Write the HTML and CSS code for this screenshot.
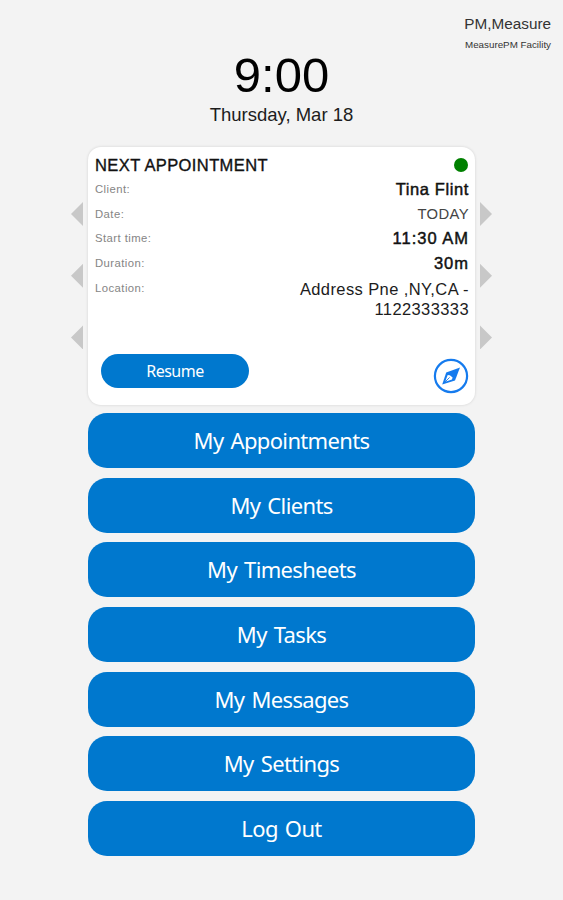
FILE: index.html
```html
<!DOCTYPE html>
<html lang="en">
<head>
    <meta charset="UTF-8">
    <meta name="viewport" content="width=device-width, initial-scale=1.0">
    <title>Home</title>
    <link rel="stylesheet" href="styles.css">
</head>
<body>
    <!-- Logged in user -->
    <header class="user-info">
        <div class="user-name">PM,Measure</div>
        <div class="user-facility">MeasurePM Facility</div>
    </header>

    <!-- Clock -->
    <div class="clock">
        <div class="clock-time">9:00</div>
        <div class="clock-date">Thursday, Mar 18</div>
    </div>

    <!-- Next appointment -->
    <div class="carousel">
        <div class="arrows">
            <div class="arrow left"></div>
            <div class="arrow left"></div>
            <div class="arrow left"></div>
        </div>

        <div class="card">
            <div class="card-header">
                <h2 class="card-title">NEXT APPOINTMENT</h2>
                <div class="status-dot"></div>
            </div>
            <div class="row">
                <span class="label">Client:</span>
                <span class="value strong">Tina Flint</span>
            </div>
            <div class="row">
                <span class="label">Date:</span>
                <span class="value today">TODAY</span>
            </div>
            <div class="row">
                <span class="label">Start time:</span>
                <span class="value strong time">11:30 AM</span>
            </div>
            <div class="row">
                <span class="label">Duration:</span>
                <span class="value strong time">30m</span>
            </div>
            <div class="row location">
                <span class="label">Location:</span>
                <span class="value address">Address Pne ,NY,CA -<br>1122333333</span>
            </div>
            <div class="card-footer">
                <button class="resume">Resume</button>
                <svg class="compass" viewBox="0 0 36 36">
                    <circle cx="18" cy="18" r="16.1" fill="none" stroke="#157bee" stroke-width="2.2"/>
                    <path d="M27 9.6 L22 22.6 L9.2 26.6 L13.2 14.6 Z" fill="#157bee"/>
                    <path d="M14.7 17 L16.8 17.2 L19.6 19.6 L19 21.6 L12.2 23.8 Z" fill="#fff"/>
                    <path d="M11.6 24.4 L16.6 19.4" stroke="#157bee" stroke-width="0.9"/>
                </svg>
            </div>
        </div>

        <div class="arrows">
            <div class="arrow right"></div>
            <div class="arrow right"></div>
            <div class="arrow right"></div>
        </div>
    </div>

    <!-- Menu -->
    <nav class="menu">
        <button class="menu-btn">My Appointments</button>
        <button class="menu-btn">My Clients</button>
        <button class="menu-btn">My Timesheets</button>
        <button class="menu-btn">My Tasks</button>
        <button class="menu-btn">My Messages</button>
        <button class="menu-btn">My Settings</button>
        <button class="menu-btn">Log Out</button>
    </nav>
</body>
</html>
```
FILE: styles.css
```css
* {
    margin: 0;
    padding: 0;
    box-sizing: border-box;
}

body {
    height: 100vh;
    background: #f3f3f3;
    overflow: hidden;
    font-family: "Liberation Sans", Arial, sans-serif;
    color: #1c1c1c;
}

/* User */
.user-info {
    height: 50px;
    padding: 14px 12px 0 0;
    text-align: right;
    color: #333;
}

.user-name {
    font-size: 15.3px;
    line-height: 20px;
}

.user-facility {
    margin-top: 4px;
    font-size: 9.8px;
    line-height: 14px;
}

/* Clock */
.clock {
    height: 97px;
    text-align: center;
}

.clock-time {
    font-size: 49px;
    line-height: 50px;
    color: #000;
}

.clock-date {
    font-size: 18.5px;
    line-height: 22px;
    margin-top: 4px;
}

/* Appointment card */
.carousel {
    display: flex;
    justify-content: center;
    gap: 5px;
    height: 258px;
}

.arrows {
    display: flex;
    flex-direction: column;
    gap: 37.7px;
    padding-top: 55px;
}

.arrow {
    width: 12px;
    height: 24px;
    background: #c8c8c8;
}

.arrow.left {
    clip-path: polygon(100% 0, 100% 100%, 0 50%);
}

.arrow.right {
    clip-path: polygon(0 0, 100% 50%, 0 100%);
}

.card {
    display: flex;
    flex-direction: column;
    width: 387px;
    padding: 6px 6px 0 7px;
    background: #fff;
    border-radius: 13px;
    box-shadow: 0 0 3px rgba(0, 0, 0, 0.14);
}

.card-header {
    display: flex;
    justify-content: space-between;
    align-items: center;
    height: 24px;
}

.card-title {
    font-size: 16.5px;
    font-weight: normal;
    letter-spacing: 0.4px;
    color: #111;
    -webkit-text-stroke: 0.35px #111;
}

.status-dot {
    width: 14px;
    height: 14px;
    border-radius: 50%;
    background: #008000;
    margin-right: 1px;
}

.row {
    display: flex;
    justify-content: space-between;
    height: 24.7px;
    line-height: 25px;
}

.label {
    font-size: 11.3px;
    letter-spacing: 0.45px;
    color: #858585;
}

.value {
    font-size: 16.5px;
    letter-spacing: 0.4px;
    text-align: right;
}

.strong {
    letter-spacing: 0.6px;
    color: #111;
    -webkit-text-stroke: 0.45px #111;
}

.time {
    letter-spacing: 1px;
}

.today {
    font-size: 14.8px;
    color: #444;
}

.address {
    line-height: 20px;
    padding-top: 3px;
}

.location {
    height: 78px;
}

.card-footer {
    display: flex;
    justify-content: space-between;
    align-items: flex-start;
    padding-left: 6px;
}

.resume {
    width: 148px;
    height: 34px;
    border: none;
    border-radius: 17px;
    background: #0078ce;
    color: #fff;
    font-family: "Noto Sans", sans-serif;
    font-size: 16px;
    letter-spacing: -0.5px;
}

.compass {
    width: 36px;
    height: 36px;
    margin-top: 4px;
}

/* Menu buttons */
.menu {
    display: flex;
    flex-direction: column;
    align-items: center;
    gap: 9.7px;
    padding-top: 8px;
}

.menu-btn {
    width: 387px;
    height: 55px;
    padding-bottom: 1px;
    border: none;
    border-radius: 19px;
    background: #0078ce;
    color: #fff;
    font-family: "Noto Sans", sans-serif;
    font-size: 22px;
    letter-spacing: -0.65px;
    word-spacing: 2px;
}
```
